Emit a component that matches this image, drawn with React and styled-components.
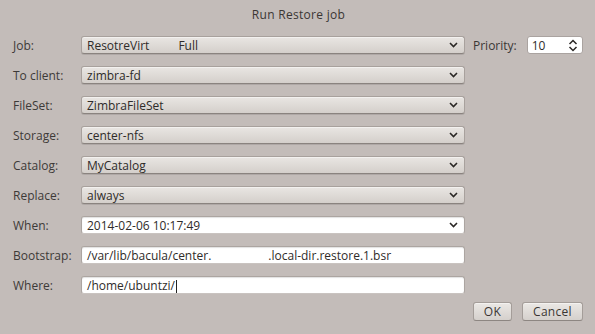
import React from "react";
import styled, { createGlobalStyle } from "styled-components";

const GlobalStyle = createGlobalStyle`
  html, body {
    margin: 0;
    padding: 0;
    background: #c3bcb9;
  }
  body {
    font-family: "Open Sans", "DejaVu Sans", sans-serif;
    font-size: 12px;
    color: #3a3735;
  }
`;

const Dialog = styled.div`
  width: 595px;
  height: 334px;
  box-sizing: border-box;
  padding: 0 12px 0 13px;
  background: #c3bcb9;
  display: flex;
  flex-direction: column;
`;

const Title = styled.div`
  height: 30px;
  line-height: 30px;
  text-align: center;
  color: #3a3634;
  letter-spacing: 0.3px;
  padding-left: 1px;
`;

const Form = styled.div`
  margin-top: 6px;
  display: grid;
  grid-template-columns: 68px 384px 1fr;
  grid-auto-rows: 18px;
  row-gap: 12px;
  align-items: center;
`;

const Label = styled.div`
  color: #3d3a38;
  white-space: nowrap;
  grid-column: 1;
`;

const Field = styled.div`
  grid-column: 2;
  height: 18px;
  box-sizing: border-box;
  border-radius: 3px;
  display: flex;
  align-items: center;
  padding: 0 6px 0 5px;
  color: #2f2c2a;
  white-space: nowrap;
  overflow: hidden;
  border: 1px solid ${(p) => (p.$combo ? "#a8a19d" : "#aca5a1")};
  border-bottom-color: ${(p) => (p.$combo ? "#8a837f" : "#c9c3c0")};
  background: ${(p) =>
    p.$combo ? "linear-gradient(#e9e6e3, #d4cfcb)" : "#ffffff"};
  box-shadow: ${(p) =>
    p.$combo
      ? "inset 0 1px 0 #f3f1ef, 0 1px 0 rgba(0,0,0,0.1)"
      : "inset 0 1px 1px rgba(0,0,0,0.12)"};
`;

const Value = styled.span`
  flex: 1;
`;

const Spaced = styled.span`
  display: inline-block;
  width: ${(p) => p.$w}px;
`;

const Cursor = styled.span`
  display: inline-block;
  width: 1px;
  height: 13px;
  background: #222;
  vertical-align: middle;
  margin-left: 1px;
`;

const Side = styled.div`
  grid-column: 3;
  display: flex;
  align-items: center;
  gap: 10px;
  padding-left: 8px;
`;

const SpinBox = styled.div`
  width: 56px;
  height: 18px;
  box-sizing: border-box;
  background: #fff;
  border: 1px solid #aaa3a0;
  border-radius: 3px;
  display: flex;
  align-items: center;
  justify-content: space-between;
  padding: 0 4px 0 4px;
  color: #2f2c2a;
`;

const Buttons = styled.div`
  margin-top: 8px;
  display: flex;
  justify-content: flex-end;
  gap: 10px;
`;

const Button = styled.button`
  font: inherit;
  color: #3a3634;
  height: 19px;
  width: ${(p) => p.$w}px;
  padding: 0;
  box-sizing: border-box;
  border: 1px solid #a49d99;
  border-bottom-color: #8d8682;
  border-radius: 3px;
  background: linear-gradient(#ebe8e5, #d5d0cc);
  box-shadow: inset 0 1px 0 #f4f2f0;
  display: flex;
  align-items: center;
  justify-content: center;
  letter-spacing: 0.3px;
`;

const Chevron = () => (
  <svg width="9" height="6" viewBox="0 0 9 6">
    <path d="M1 1 L4.5 4.5 L8 1" fill="none" stroke="#2b2826" strokeWidth="1.6" />
  </svg>
);

const UpDown = () => (
  <svg width="10" height="13" viewBox="0 0 10 13">
    <path d="M1.5 5 L5 1.5 L8.5 5" fill="none" stroke="#2b2826" strokeWidth="1.5" />
    <path d="M1.5 8 L5 11.5 L8.5 8" fill="none" stroke="#2b2826" strokeWidth="1.5" />
  </svg>
);

const combos = [
  { label: "To client:", value: "zimbra-fd" },
  { label: "FileSet:", value: "ZimbraFileSet" },
  { label: "Storage:", value: "center-nfs" },
  { label: "Catalog:", value: "MyCatalog" },
  { label: "Replace:", value: "always" },
];

export default function App() {
  return (
    <>
      <GlobalStyle />
      <Dialog>
        <Title>Run Restore job</Title>
        <Form>
          <Label>Job:</Label>
          <Field $combo>
            <Value>
              ResotreVirt<Spaced $w={29} />Full
            </Value>
            <Chevron />
          </Field>
          <Side>
            <span>Priority:</span>
            <SpinBox>
              <span>10</span>
              <UpDown />
            </SpinBox>
          </Side>

          {combos.map((c) => (
            <React.Fragment key={c.label}>
              <Label>{c.label}</Label>
              <Field $combo>
                <Value>{c.value}</Value>
                <Chevron />
              </Field>
            </React.Fragment>
          ))}

          <Label>When:</Label>
          <Field>
            <Value>2014-02-06 10:17:49</Value>
            <Chevron />
          </Field>

          <Label>Bootstrap:</Label>
          <Field>
            <Value>
              /var/lib/bacula/center.<Spaced $w={57} />.local-dir.restore.1.bsr
            </Value>
          </Field>

          <Label>Where:</Label>
          <Field>
            <Value>
              /home/ubuntzi/
              <Cursor />
            </Value>
          </Field>
        </Form>
        <Buttons>
          <Button $w={39}>OK</Button>
          <Button $w={61}>Cancel</Button>
        </Buttons>
      </Dialog>
    </>
  );
}
